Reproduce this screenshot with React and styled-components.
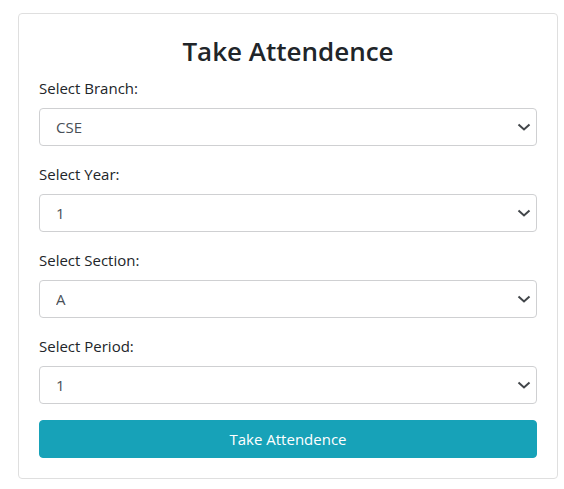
import React from "react";
import styled, { createGlobalStyle } from "styled-components";

const GlobalStyle = createGlobalStyle`
  *, *::before, *::after { box-sizing: border-box; }
  body {
    margin: 0;
    background: #fff;
    color: #212529;
    font-family: "Open Sans", "Noto Sans", sans-serif;
    font-size: 15px;
    line-height: 24px;
  }
`;

const Page = styled.main`
  padding: 13px 6px 10px 18px;
`;

const Card = styled.form`
  padding: 20px;
  border: 1px solid #dfdfdf;
  border-radius: 4px;
`;

const Title = styled.h1`
  margin: 0 0 8px;
  font-size: 26px;
  font-weight: 600;
  line-height: 34px;
  text-align: center;
`;

const Field = styled.div`
  margin-bottom: 16px;
`;

const Label = styled.label`
  display: block;
  margin-bottom: 8px;
`;

const SelectWrap = styled.div`
  display: grid;
  align-items: center;

  & > * { grid-area: 1 / 1; }
`;

const Select = styled.select`
  width: 100%;
  height: 38px;
  padding: 0 16px;
  appearance: none;
  border: 1px solid #cfd0d2;
  border-radius: 4px;
  background: #fff;
  color: #495057;
  font: inherit;
`;

const Chevron = styled.svg`
  justify-self: end;
  width: 14px;
  height: 8px;
  margin-right: 6px;
  pointer-events: none;
`;

const Button = styled.button`
  display: block;
  width: 100%;
  height: 38px;
  border: 1px solid #17a2b8;
  border-radius: 4px;
  background: #17a2b8;
  color: #fff;
  font: inherit;
`;

const fields = [
  { id: "branch", label: "Select Branch:", options: ["CSE", "ECE", "EEE"] },
  { id: "year", label: "Select Year:", options: ["1", "2", "3", "4"] },
  { id: "section", label: "Select Section:", options: ["A", "B", "C"] },
  { id: "period", label: "Select Period:", options: ["1", "2", "3", "4"] },
];

export default function App() {
  return (
    <Page>
      <GlobalStyle />
      <Card onSubmit={(e) => e.preventDefault()}>
        <Title>Take Attendence</Title>
        {fields.map((f) => (
          <Field key={f.id}>
            <Label htmlFor={f.id}>{f.label}</Label>
            <SelectWrap>
              <Select id={f.id} name={f.id}>
                {f.options.map((o) => (
                  <option key={o}>{o}</option>
                ))}
              </Select>
              <Chevron viewBox="0 0 14 8" aria-hidden="true">
                <path d="M1.5 1.5 7 6.5 12.5 1.5" fill="none" stroke="#42464a" strokeWidth="2" />
              </Chevron>
            </SelectWrap>
          </Field>
        ))}
        <Button type="submit">Take Attendence</Button>
      </Card>
    </Page>
  );
}
